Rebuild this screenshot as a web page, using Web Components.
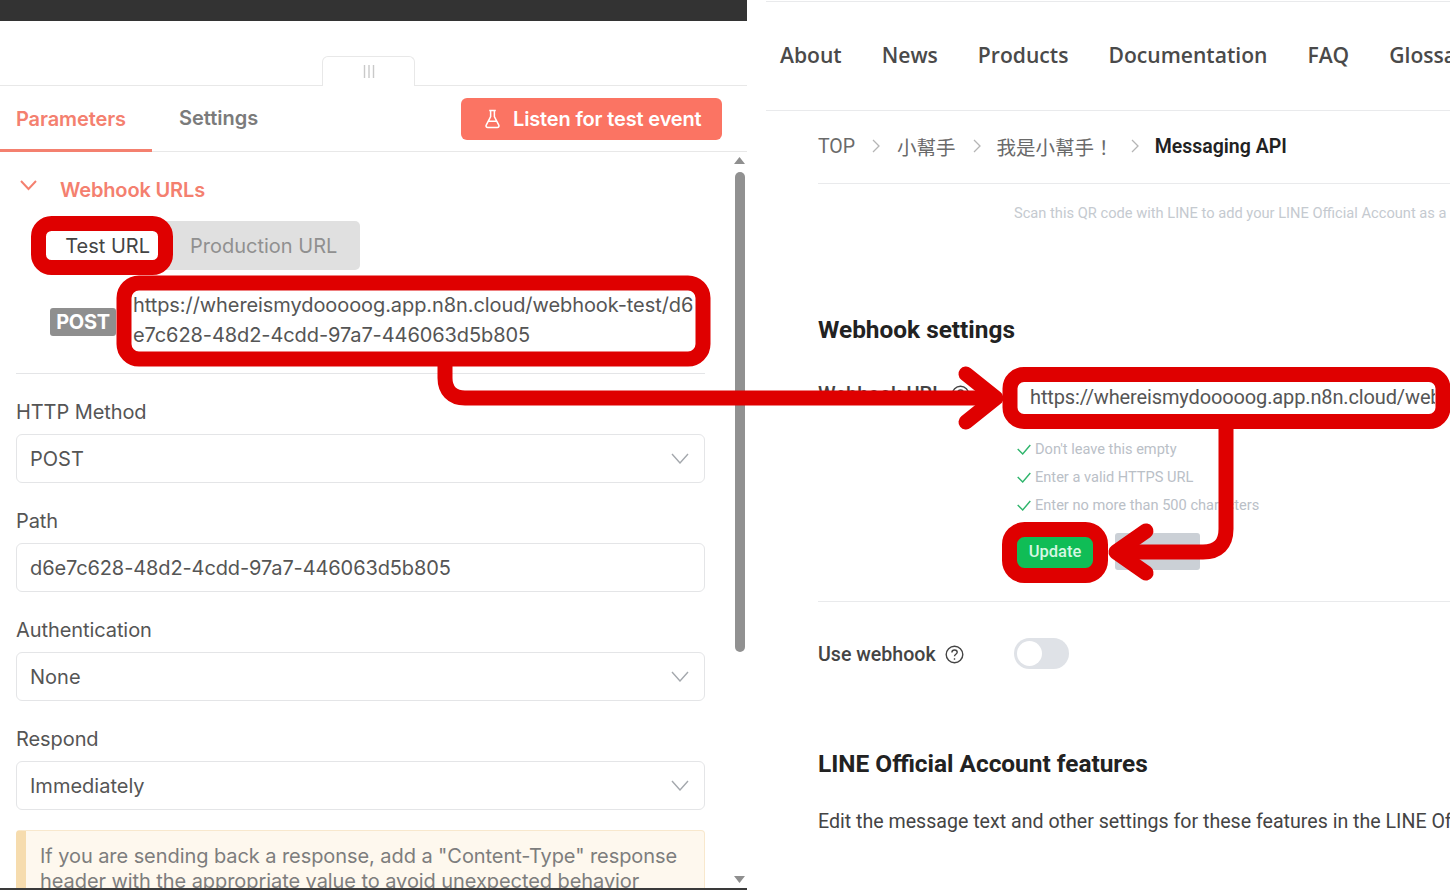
<!DOCTYPE html>
<html>
<head>
<meta charset="utf-8">
<title>Webhook setup</title>
<style>
    html, body { margin: 0; padding: 0; background: #fff; }
    body { width: 1450px; height: 890px; overflow: hidden; position: relative; }
    #page { display: flex; gap: 19px; height: 890px; }
</style>
</head>
<body>
<div id="page">
    <n8n-panel>
        <n8n-field label="HTTP Method" value="POST" select></n8n-field>
        <n8n-field label="Path" value="d6e7c628-48d2-4cdd-97a7-446063d5b805" tight></n8n-field>
        <n8n-field label="Authentication" value="None" select></n8n-field>
        <n8n-field label="Respond" value="Immediately" select></n8n-field>
        <n8n-notice>If you are sending back a response, add a "Content-Type" response header with the appropriate value to avoid unexpected behavior</n8n-notice>
    </n8n-panel>
    <line-panel>
        <line-check>Don't leave this empty</line-check>
        <line-check>Enter a valid HTTPS URL</line-check>
        <line-check>Enter no more than 500 characters</line-check>
    </line-panel>
</div>
<red-marks></red-marks>

<script>
const hookHost = 'https://whereismyd' + 'o'.repeat(5) + 'g.app.n8n.cloud';

class N8nField extends HTMLElement {
    constructor() {
        super();
        this.attachShadow({ mode: 'open' });
        const chevron = this.hasAttribute('select')
            ? '<svg width="18" height="11" viewBox="0 0 18 11" fill="none" stroke="#a4a8ad" stroke-width="1.4"><path d="M1 1l8 9 8-9"/></svg>'
            : '';
        const spacing = this.hasAttribute('tight') ? '-0.11px' : '0';
        this.shadowRoot.innerHTML = `
            <style>
                :host { display: block; margin-top: 26px; font-family: Inter, sans-serif; }
                label { display: block; font-size: 20px; line-height: 24px; color: #555; letter-spacing: -0.08px; }
                #box {
                    box-sizing: border-box;
                    height: 49px;
                    margin-top: 10px;
                    padding: 0 15px 0 13px;
                    border: 1px solid #e4e5e7;
                    border-radius: 6px;
                    display: flex;
                    align-items: center;
                    justify-content: space-between;
                    font-size: 20px;
                    color: #555;
                    letter-spacing: ${spacing};
                }
            </style>
            <label>${this.getAttribute('label')}</label>
            <div id="box"><span>${this.getAttribute('value')}</span>${chevron}</div>
        `;
    }
}

class N8nNotice extends HTMLElement {
    constructor() {
        super();
        this.attachShadow({ mode: 'open' });
        this.shadowRoot.innerHTML = `
            <style>
                :host {
                    display: block;
                    box-sizing: border-box;
                    margin-top: 20px;
                    height: 90px;
                    padding: 13px 14px 0 14px;
                    background: #fef8ee;
                    border: 1px solid #f8e8cd;
                    border-left: 10px solid #f6dcae;
                    border-radius: 4px;
                    font-family: Inter, sans-serif;
                    font-size: 20px;
                    line-height: 24.5px;
                    letter-spacing: -0.07px;
                    color: #7d7d7d;
                }
            </style>
            <slot></slot>
        `;
    }
}

class N8nPanel extends HTMLElement {
    constructor() {
        super();
        this.attachShadow({ mode: 'open' });
        this.shadowRoot.innerHTML = `
            <style>
                :host {
                    display: flex;
                    flex-direction: column;
                    flex: 0 0 747px;
                    height: 890px;
                    font-family: Inter, sans-serif;
                    border-bottom: 2px solid #3a3a3a;
                    box-sizing: border-box;
                }
                #topbar { height: 21px; background: #333; flex: none; }
                #handle-row {
                    height: 65px;
                    flex: none;
                    box-sizing: border-box;
                    border-bottom: 1px solid #e8e8e8;
                    display: flex;
                    align-items: flex-end;
                    padding-left: 322px;
                }
                #handle {
                    box-sizing: border-box;
                    width: 93px;
                    height: 30px;
                    margin-bottom: -1px;
                    background: #fff;
                    border: 1px solid #e8e8e8;
                    border-bottom: none;
                    border-radius: 6px 6px 0 0;
                    display: flex;
                    justify-content: center;
                    align-items: center;
                }
                #tabs {
                    height: 66px;
                    flex: none;
                    box-sizing: border-box;
                    border-bottom: 1px solid #e8e8e8;
                    display: flex;
                    align-items: stretch;
                    font-size: 20px;
                    font-weight: 600;
                }
                #tabs > div { display: flex; align-items: center; box-sizing: border-box; }
                #params {
                    width: 152px;
                    padding: 2px 0 0 16px;
                    color: #f4806f;
                    border-bottom: 3px solid #f4806f;
                    margin-bottom: -1px;
                    letter-spacing: -0.1px;
                }
                #settings { margin-left: 27px; color: #7b7b7b; padding-bottom: 1px; }
                #listen {
                    margin: 12px 25px 0 auto;
                    width: 261px;
                    height: 42px;
                    background: #fb7463;
                    border-radius: 6px;
                    color: #fff;
                    padding-left: 24px;
                    gap: 13px;
                    letter-spacing: -0.15px;
                }
                #body { flex: 1; display: flex; overflow: hidden; min-height: 0; }
                #content { width: 689px; margin-left: 16px; flex: none; }
                #head {
                    margin-top: 24px;
                    height: 28px;
                    display: flex;
                    align-items: center;
                    color: #f4806f;
                    font-size: 20px;
                    font-weight: 600;
                    line-height: 28px;
                    letter-spacing: -0.15px;
                }
                #head svg { margin: -10px 23px 0 4px; }
                #switch {
                    margin: 17px 0 0 29px;
                    width: 315px;
                    height: 49px;
                    background: #e0e0e0;
                    border-radius: 5px;
                    display: flex;
                    align-items: center;
                    font-size: 20px;
                    color: #909090;
                }
                #test {
                    width: 113px;
                    height: 29px;
                    background: #fff;
                    color: #444;
                    box-sizing: border-box;
                    padding-right: 8px;
                    text-align: right;
                    line-height: 30px;
                }
                #prod { margin-left: 32px; }
                #url-row {
                    margin-top: 20px;
                    display: flex;
                    align-items: center;
                    gap: 17px;
                    padding-left: 34px;
                }
                #badge {
                    width: 66px;
                    height: 28px;
                    background: #8f8f8f;
                    border-radius: 3px;
                    color: #fff;
                    font-size: 20px;
                    font-weight: 700;
                    letter-spacing: -0.3px;
                    line-height: 28px;
                    text-align: center;
                    margin-top: 4px;
                }
                #url { font-size: 20px; line-height: 30px; color: #555; white-space: nowrap; }
                #url .wide { letter-spacing: -0.08px; }
                #url .narrow { letter-spacing: -0.09px; }
                #rule { height: 1px; background: #e4e5e7; margin: 23px 0 0; }
                #scroll {
                    width: 11px;
                    margin-left: 29px;
                    flex: none;
                    display: flex;
                    flex-direction: column;
                    align-items: center;
                    padding: 5px 0;
                    box-sizing: border-box;
                }
                #thumb {
                    width: 10px;
                    height: 480px;
                    background: #919191;
                    border-radius: 5px;
                    margin: 8px 0 auto;
                    flex: none;
                }
                #scroll svg { display: block; flex: none; }
            </style>
            <div id="topbar"></div>
            <div id="handle-row">
                <div id="handle">
                    <svg width="12" height="13" viewBox="0 0 12 13" fill="none" stroke="#c9c9c9" stroke-width="1.4"><path d="M1.5 0v13M6 0v13M10.5 0v13"/></svg>
                </div>
            </div>
            <div id="tabs">
                <div id="params">Parameters</div>
                <div id="settings">Settings</div>
                <div id="listen">
                    <svg width="15" height="20" viewBox="0 0 16 20" fill="none" stroke="#fff" stroke-width="1.6" stroke-linejoin="round"><path d="M4.5 1h7M6 1v6.5L1.3 16.6c-.6 1.2.2 2.4 1.5 2.4h10.4c1.3 0 2.1-1.2 1.5-2.4L10 7.500V1M3.800 12.500h8.400"/></svg>
                    <span>Listen for test event</span>
                </div>
            </div>
            <div id="body">
                <div id="content">
                    <div id="head">
                        <svg width="17" height="11" viewBox="0 0 17 11" fill="none" stroke="#f4806f" stroke-width="2"><path d="M1 1l7.500 8L16 1"/></svg>
                        <span>Webhook URLs</span>
                    </div>
                    <div id="switch">
                        <div id="test">Test URL</div>
                        <div id="prod">Production URL</div>
                    </div>
                    <div id="url-row">
                        <div id="badge">POST</div>
                        <div id="url">
                            <div class="wide">${hookHost}/webhook-test/d6</div>
                            <div class="narrow">e7c628-48d2-4cdd-97a7-446063d5b805</div>
                        </div>
                    </div>
                    <div id="rule"></div>
                    <slot></slot>
                </div>
                <div id="scroll">
                    <svg width="11" height="7" viewBox="0 0 11 7" fill="#8f8f8f"><path d="M5.500 0L11 7H0z"/></svg>
                    <div id="thumb"></div>
                    <svg width="11" height="7" viewBox="0 0 11 7" fill="#8f8f8f"><path d="M5.500 7L0 0h11z"/></svg>
                </div>
            </div>
        `;
    }
}

class LineCheck extends HTMLElement {
    constructor() {
        super();
        this.attachShadow({ mode: 'open' });
        this.shadowRoot.innerHTML = `
            <style>
                :host {
                    display: flex;
                    align-items: center;
                    gap: 4px;
                    height: 28px;
                    font-family: Roboto, sans-serif;
                    font-size: 14.6px;
                    color: #bac0c7;
                    white-space: nowrap;
                }
            </style>
            <svg width="14" height="11" viewBox="0 0 14 11" fill="none" stroke="#2fb56c" stroke-width="1.4"><path d="M.7 5l5 5L13.300 1"/></svg>
            <slot></slot>
        `;
    }
}

const helpIcon = `<svg width="19" height="19" viewBox="0 0 19 19" fill="none" stroke="#444" stroke-width="1.4"><circle cx="9.500" cy="9.500" r="8.300"/><path d="M6.900 7.500c0-1.500 1.200-2.500 2.700-2.500s2.600 1 2.600 2.300c0 2-2.700 2-2.700 4M9.500 13.300v1.500"/></svg>`;
const crumbIcon = `<svg width="8" height="14" viewBox="0 0 8 14" fill="none" stroke="#b5b5b5" stroke-width="1.300"><path d="M1 1l6 6-6 6"/></svg>`;

class LinePanel extends HTMLElement {
    constructor() {
        super();
        this.attachShadow({ mode: 'open' });
        this.shadowRoot.innerHTML = `
            <style>
                :host {
                    display: block;
                    flex: 1;
                    min-width: 0;
                    height: 890px;
                    overflow: hidden;
                    font-family: Roboto, sans-serif;
                }
                hr { border: none; height: 1px; background: #e9eaec; margin: 0; }
                #top-line { margin-top: 1px; }
                nav {
                    height: 108px;
                    box-sizing: border-box;
                    padding: 0 0 4px 14px;
                    display: flex;
                    align-items: center;
                    gap: 40px;
                    font-family: "Open Sans", sans-serif;
                    font-size: 21.1px;
                    font-weight: 600;
                    color: #4a4a4a;
                    white-space: nowrap;
                }
                #main { padding-left: 52px; }
                #crumbs {
                    height: 72px;
                    display: flex;
                    align-items: center;
                    font-size: 19.5px;
                    color: #6a6a6a;
                    white-space: nowrap;
                    font-family: Roboto, "Noto Sans CJK TC", sans-serif;
                    padding-bottom: 2px;
                    box-sizing: border-box;
                }
                #crumbs svg { margin: 0 17px; flex: none; }
                #crumbs svg:nth-of-type(2) { margin-right: 16px; }
                #crumbs svg:nth-of-type(3) { margin-right: 16px; }
                #crumbs b { color: #222; font-weight: 600; }
                #scan {
                    margin: 19px 0 0 196px;
                    font-size: 14.67px;
                    line-height: 20px;
                    color: #c5cad0;
                    white-space: nowrap;
                }
                h2 {
                    margin: 0;
                    font-size: 24.4px;
                    font-weight: 700;
                    line-height: 30px;
                    color: #222;
                }
                #webhook-title { margin-top: 92px; }
                #url-row { display: flex; margin-top: 36px; height: 32px; align-items: center; }
                #url-label {
                    flex: 0 0 199px;
                    display: flex;
                    align-items: center;
                    gap: 8px;
                    font-size: 20px;
                    font-weight: 500;
                    color: #444;
                    margin-top: -6px;
                }
                #url-input {
                    flex: none;
                    width: 418px;
                    padding-left: 13px;
                    box-sizing: border-box;
                    overflow: hidden;
                    white-space: nowrap;
                    font-size: 20px;
                    line-height: 30px;
                    letter-spacing: -0.13px;
                    color: #555;
                }
                #checks { margin: 22px 0 0 199px; }
                #buttons { display: flex; gap: 22px; margin: 14px 0 0 199px; align-items: center; height: 37px; }
                #update {
                    width: 76px;
                    height: 33px;
                    background: #10bd56;
                    border-radius: 3px;
                    color: #d6f7e2;
                    font-size: 16.5px;
                    font-weight: 500;
                    line-height: 33px;
                    text-align: center;
                }
                #cancel { width: 85px; height: 37px; background: #cbd0d6; border-radius: 3px; }
                #rule-update { margin-top: 31px; }
                #use-row { display: flex; align-items: center; margin-top: 35px; height: 32px; }
                #use-label {
                    flex: 0 0 196px;
                    display: flex;
                    align-items: center;
                    gap: 9px;
                    font-size: 19.6px;
                    font-weight: 500;
                    color: #444;
                    margin-top: 2px;
                }
                #toggle {
                    width: 55px;
                    height: 31px;
                    background: #dfe2e7;
                    border-radius: 16px;
                    box-sizing: border-box;
                    padding: 3px;
                }
                #toggle div { width: 25px; height: 25px; background: #fff; border-radius: 50%; }
                #features-title { margin-top: 80px; }
                #edit {
                    margin-top: 29px;
                    font-size: 19.6px;
                    line-height: 28px;
                    color: #444;
                    white-space: nowrap;
                }
            </style>
            <hr id="top-line">
            <nav>
                <span>About</span><span>News</span><span>Products</span><span>Documentation</span><span>FAQ</span><span>Glossary</span>
            </nav>
            <hr>
            <div id="main">
                <div id="crumbs">
                    <span>TOP</span>${crumbIcon}<span>小幫手</span>${crumbIcon}<span>我是小幫手！</span>${crumbIcon}<b>Messaging API</b>
                </div>
                <hr>
                <div id="scan">Scan this QR code with LINE to add your LINE Official Account as a</div>
                <h2 id="webhook-title">Webhook settings</h2>
                <div id="url-row">
                    <div id="url-label"><span>Webhook URL</span>${helpIcon}</div>
                    <div id="url-input">${hookHost}/webhook/d6e7c628</div>
                </div>
                <div id="checks"><slot></slot></div>
                <div id="buttons"><div id="update">Update</div><div id="cancel"></div></div>
                <hr id="rule-update">
                <div id="use-row">
                    <div id="use-label"><span>Use webhook</span>${helpIcon}</div>
                    <div id="toggle"><div></div></div>
                </div>
                <h2 id="features-title">LINE Official Account features</h2>
                <div id="edit">Edit the message text and other settings for these features in the LINE Official Account Manager</div>
            </div>
        `;
    }
}

// the red callouts sit over both panels, so this one is a full page overlay
class RedMarks extends HTMLElement {
    constructor() {
        super();
        this.attachShadow({ mode: 'open' });
        this.shadowRoot.innerHTML = `
            <style>
                :host { display: block; position: absolute; left: 0; top: 0; width: 1450px; height: 890px; pointer-events: none; }
                svg { display: block; }
            </style>
            <svg width="1450" height="890" viewBox="0 0 1450 890" fill="none" stroke="#df0000" stroke-width="15" stroke-linecap="round" stroke-linejoin="round">
                <rect x="38.500" y="223.500" width="127" height="44" rx="13"/>
                <rect x="124" y="283" width="579" height="76" rx="15"/>
                <rect x="1010" y="374.500" width="433" height="47" rx="14"/>
                <rect x="1009.500" y="529.500" width="91" height="46" rx="15"/>
                <path stroke-linecap="butt" d="M445 362v16c0 12 7 20 20 20h530"/>
                <path d="M966 374l30 24-30 24"/>
                <path stroke-linecap="butt" d="M1226 425v104c0 15-8 23-23 23h-85"/>
                <path d="M1146 531l-30 21 30 21"/>
            </svg>
        `;
    }
}

customElements.define('n8n-field', N8nField);
customElements.define('n8n-notice', N8nNotice);
customElements.define('n8n-panel', N8nPanel);
customElements.define('line-check', LineCheck);
customElements.define('line-panel', LinePanel);
customElements.define('red-marks', RedMarks);
</script>
</body>
</html>
